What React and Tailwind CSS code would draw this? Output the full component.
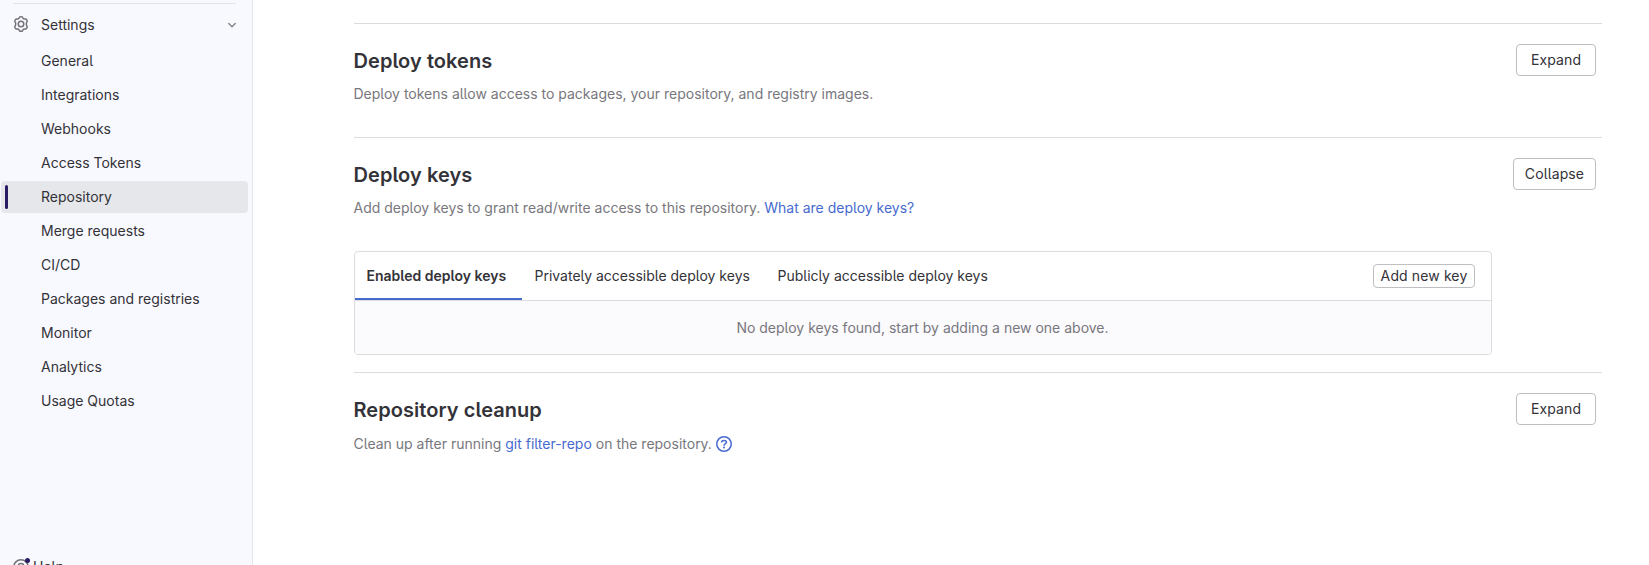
import React from "react";

const navItems = [
  { label: "General" },
  { label: "Integrations" },
  { label: "Webhooks" },
  { label: "Access Tokens" },
  { label: "Repository", active: true },
  { label: "Merge requests" },
  { label: "CI/CD" },
  { label: "Packages and registries" },
  { label: "Monitor" },
  { label: "Analytics" },
  { label: "Usage Quotas" },
];

function SettingsIcon() {
  return (
    <svg width="16" height="16" viewBox="0 0 16 16" fill="none" stroke="#737278" strokeWidth="1.5" strokeLinejoin="round">
      <path d="M6.6 1.1c.4-.45 2.4-.45 2.8 0l.6 1.15c.3.3 1 .7 1.5.8l1.3-.05c.65.1 1.65 1.8 1.4 2.4L13.5 6.6c-.15.5-.15 2.3 0 2.8l.7 1.2c.25.6-.75 2.3-1.4 2.4l-1.3-.05c-.5.1-1.2.5-1.5.8l-.6 1.15c-.4.45-2.4.45-2.8 0L6 13.75c-.3-.3-1-.7-1.5-.8L3.2 13c-.65-.1-1.65-1.8-1.4-2.4l.7-1.2c.15-.5.15-2.3 0-2.8L1.8 5.4C1.55 4.8 2.55 3.1 3.2 3l1.3.05c.5-.1 1.2-.5 1.5-.8z" />
      <circle cx="8" cy="8" r="2.75" />
    </svg>
  );
}

function ChevronDown() {
  return (
    <svg className="mt-0.5" width="16" height="16" viewBox="0 0 16 16" fill="none" stroke="#89888d" strokeWidth="1.5" strokeLinecap="round" strokeLinejoin="round">
      <path d="M4.75 6.5 8 9.75l3.25-3.25" />
    </svg>
  );
}

function QuestionIcon({ color }) {
  return (
    <svg className="block" width="16" height="16" viewBox="0 0 16 16" fill="none" stroke={color} strokeWidth="1.5">
      <circle cx="8" cy="8" r="7.25" />
      <path d="M5.5 6.4C5.5 5.1 6.6 4.5 8 4.5s2.5.75 2.5 1.85C10.5 7.7 8 7.8 8 9.7" />
      <circle cx="8" cy="11.6" r="1" fill={color} stroke="none" />
    </svg>
  );
}

function Button({ children, small = false }) {
  return (
    <button
      className={
        small
          ? "h-6 w-[102px] rounded border border-[#bfbfc3] bg-white text-sm leading-4 tracking-[0.12px]"
          : "h-8 shrink-0 rounded border border-[#bfbfc3] bg-white text-sm leading-4 tracking-[0.12px]"
      }
    >
      {children}
    </button>
  );
}

function Section({ title, action, wide, description, className, children }) {
  return (
    <section className={`border-t border-[#dcdcde] pt-5 ${className}`}>
      <div className="flex h-[59px] items-start justify-between pr-1.5">
        <div className="-ml-[0.5px]">
          <h4 className="pt-1 text-xl leading-[27px] font-semibold tracking-[0.06px]">{title}</h4>
          <div className="mt-2 flex h-5 items-center pt-px text-sm text-[#78777d]">{description}</div>
        </div>
        <div className={wide ? "grid w-[83px]" : "grid w-20"}>
          <Button>{action}</Button>
        </div>
      </div>
      {children}
    </section>
  );
}

export default function App() {
  return (
    <div className="flex h-[565px] overflow-hidden bg-white font-['Inter',sans-serif] text-sm text-[#333238] [font-feature-settings:'cv05']">
      <aside className="flex w-[253px] shrink-0 flex-col border-r border-[#e4e4ea] bg-[#f8f9fe] pt-[3px]">
        <div className="mr-4 ml-[13px] h-px shrink-0 bg-[#e2e2e7]" />
        <div className="mt-1 flex h-8 shrink-0 items-center pr-3 pl-[13px]">
          <SettingsIcon />
          <span className="ml-3 grow pt-px">Settings</span>
          <ChevronDown />
        </div>
        <nav className="mt-[5px] flex flex-col gap-0.5 pr-1 pl-px">
          {navItems.map((item) => (
            <a
              key={item.label}
              className={
                item.active
                  ? "flex h-8 items-center rounded bg-[#e6e7eb] pl-1"
                  : "flex h-8 items-center pl-1"
              }
            >
              <span className={item.active ? "h-6 w-[3px] rounded-full bg-[#2a1b63]" : "h-6 w-[3px]"} />
              <span className="ml-[33px]">{item.label}</span>
            </a>
          ))}
        </nav>
        <div className="mt-[142px] flex h-4 shrink-0 items-center pl-[13px]">
          <span className="relative">
            <QuestionIcon color="#737278" />
            <span className="absolute top-[-1px] right-[-1px] size-[5px] rounded-full bg-[#2a1b63]" />
          </span>
          <span className="ml-1">Help</span>
        </div>
      </aside>

      <main className="flex w-[1349px] flex-col pt-[23px] pl-[101px]">
        <Section
          className="h-[114px]"
          title="Deploy tokens"
          action="Expand"
          description="Deploy tokens allow access to packages, your repository, and registry images."
        />
        <Section
          className="h-[235px]"
          title="Deploy keys"
          action="Collapse"
          wide
          description={
            <>
              Add deploy keys to grant read/write access to this repository.
              <a className="ml-1 text-[#476ace]">What are deploy keys?</a>
            </>
          }
        >
          <div className="mt-[34px] w-[1138px] overflow-hidden rounded border border-[#dcdcde]">
            <div className="flex h-[49px] items-stretch border-b border-[#dcdcde]">
              <a className="flex w-[167px] items-center border-b-2 border-[#476ace] pt-0.5 pl-[11.5px] font-semibold">Enabled deploy keys</a>
              <a className="flex w-[243px] items-center pl-[12.5px]">Privately accessible deploy keys</a>
              <a className="flex items-center pl-[12.5px]">Publicly accessible deploy keys</a>
              <div className="ml-auto flex items-center pr-4">
                <Button small>Add new key</Button>
              </div>
            </div>
            <div className="flex h-[53px] items-center justify-center bg-[#fbfafd] pr-px text-[#78777d]">
              No deploy keys found, start by adding a new one above.
            </div>
          </div>
        </Section>
        <Section
          className="h-[114px]"
          title="Repository cleanup"
          action="Expand"
          description={
            <div className="mt-0.5 flex items-center">
              Clean up after running
              <a className="mx-1 text-[#476ace]">git filter-repo</a>
              on the repository.
              <span className="ml-1">
                <QuestionIcon color="#476ace" />
              </span>
            </div>
          }
        />
      </main>
    </div>
  );
}
